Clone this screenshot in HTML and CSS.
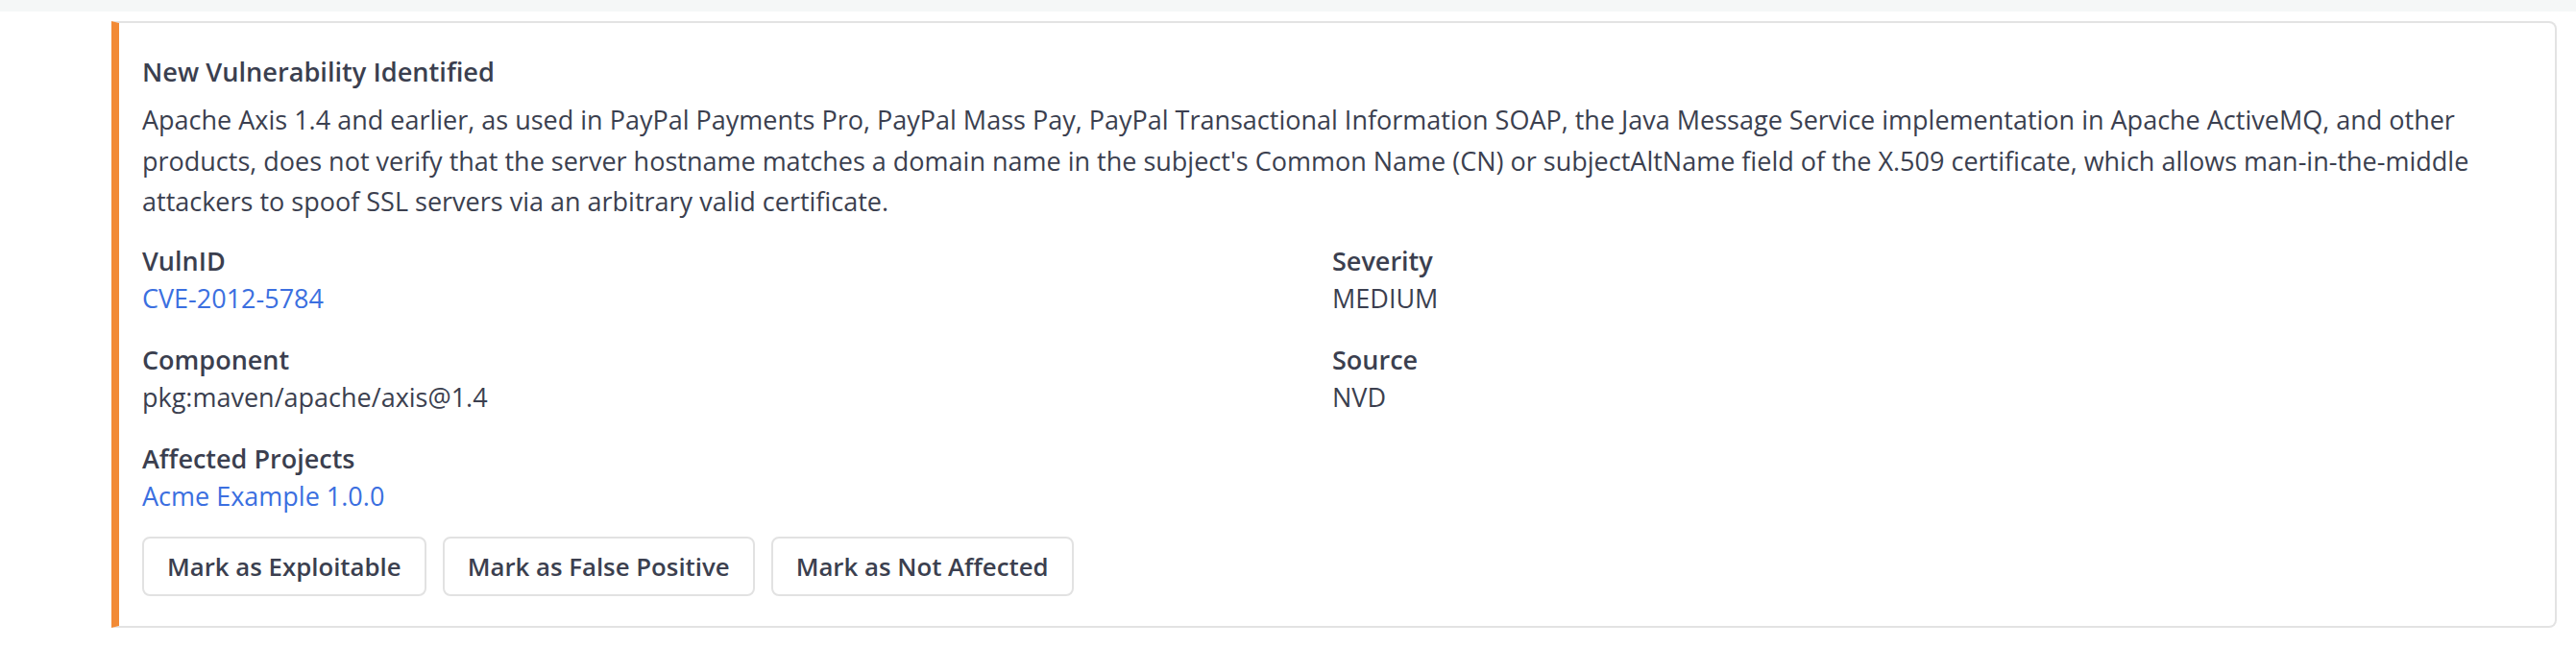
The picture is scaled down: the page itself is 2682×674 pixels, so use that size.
FILE: index.html
```html
<!DOCTYPE html>
<html lang="en">
<head>
<meta charset="utf-8">
<title>New Vulnerability Identified</title>
<link rel="stylesheet" href="styles.css">
</head>
<body>
<div class="topbar"></div>
<div class="card">
  <div class="title">New Vulnerability Identified</div>
  <p class="desc">Apache Axis 1.4 and earlier, as used in PayPal Payments Pro, PayPal Mass Pay, PayPal Transactional Information SOAP, the Java Message Service implementation in Apache ActiveMQ, and other products, does not verify that the server hostname matches a domain name in the subject's Common Name (CN) or subjectAltName field of the X.509 certificate, which allows man-in-the-middle attackers to spoof SSL servers via an arbitrary valid certificate.</p>
  <div class="fields">
    <div class="field">
      <div class="label">VulnID</div>
      <a class="value link" href="#">CVE-2012-5784</a>
    </div>
    <div class="field">
      <div class="label">Severity</div>
      <div class="value">MEDIUM</div>
    </div>
    <div class="field">
      <div class="label">Component</div>
      <div class="value">pkg:maven/apache/axis@1.4</div>
    </div>
    <div class="field">
      <div class="label">Source</div>
      <div class="value">NVD</div>
    </div>
    <div class="field">
      <div class="label">Affected Projects</div>
      <a class="value link" href="#">Acme Example 1.0.0</a>
    </div>
  </div>
  <div class="actions">
    <button class="btn">Mark as Exploitable</button>
    <button class="btn">Mark as False Positive</button>
    <button class="btn">Mark as Not Affected</button>
  </div>
</div>
</body>
</html>
```
FILE: styles.css
```css
html, body {
  margin: 0;
  padding: 0;
  background: #ffffff;
}
body {
  font-family: "Open Sans", "Liberation Sans", sans-serif;
  color: #3b3f4f;
  font-size: 27px;
}
.topbar {
  height: 12px;
  background: #f5f7f7;
}
.card {
  margin: 10px 20px 0 116px;
  border: 2px solid #e3e3e3;
  border-left: 8px solid #f28a35;
  border-radius: 0 8px 8px 0;
  padding: 30px 24px 31px 24px;
}
.title {
  font-size: 27.2px;
  font-weight: 600;
  line-height: 42.75px;
  margin-bottom: 7px;
}
.desc {
  margin: 0;
  line-height: 42.75px;
}
.fields {
  display: grid;
  grid-template-columns: 1239px 1fr;
  row-gap: 26px;
  margin-top: 21px;
}
.field {
  display: flex;
  flex-direction: column;
  align-items: flex-start;
  line-height: 38.5px;
}
.label {
  font-weight: 600;
}
.link {
  color: #3b6fe0;
  text-decoration: none;
}
.actions {
  display: flex;
  gap: 17px;
  margin-top: 23px;
}
.btn {
  font-family: "Open Sans", "Liberation Sans", sans-serif;
  font-size: 25.8px;
  font-weight: 600;
  color: #3b3f4f;
  background: #ffffff;
  border: 2px solid #e2e2e2;
  border-radius: 8px;
  padding: 10px 24px;
  line-height: 38px;
}
```
